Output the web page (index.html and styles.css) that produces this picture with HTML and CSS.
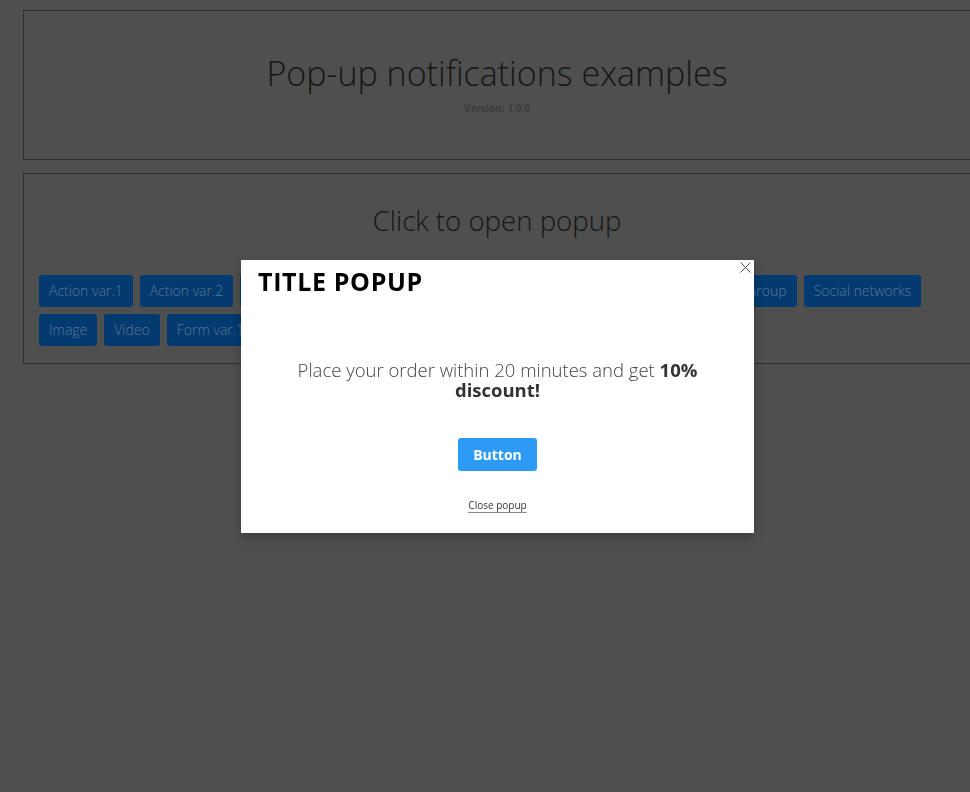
FILE: index.html
```html
<!DOCTYPE html>
<html lang="en">
<head>
    <meta charset="UTF-8">
    <meta name="viewport" content="width=device-width, initial-scale=1.0">
    <title>Pop-up notifications examples</title>
    <link rel="stylesheet" href="styles.css">
</head>
<body>
    <div class="page">
        <div class="header">
            <h1>Pop-up notifications examples</h1>
            <p class="version">Version: 1.0.0</p>
        </div>

        <div class="demo">
            <h2>Click to open popup</h2>
            <div class="buttons">
                <a href="#" class="btn">Action var.1</a>
                <a href="#" class="btn">Action var.2</a>
                <a href="#" class="btn">Action var.3</a>
                <a href="#" class="btn">Subscribe var.1</a>
                <a href="#" class="btn">Subscribe var.2</a>
                <a href="#" class="btn">Countdown timer 1</a>
                <a href="#" class="btn">Group</a>
                <a href="#" class="btn">Social networks</a>
                <a href="#" class="btn">Image</a>
                <a href="#" class="btn">Video</a>
                <a href="#" class="btn">Form var.1</a>
                <a href="#" class="btn">Form var.2</a>
                <a href="#" class="btn">Cookies</a>
            </div>
        </div>
    </div>

    <div class="popup">
        <a href="#" class="popup-close" aria-label="Close">
            <svg width="11" height="11" viewBox="0 0 11 11">
                <path d="M0.5 0.5 L10.5 10.5 M10.5 0.5 L0.5 10.5" stroke="#555" stroke-width="1" fill="none"/>
            </svg>
        </a>
        <h3 class="popup-title">TITLE POPUP</h3>
        <p class="popup-text">Place your order within 20 minutes and get <b>10%</b> <b>discount!</b></p>
        <a href="#" class="popup-btn">Button</a>
        <a href="#" class="popup-link">Close popup</a>
    </div>
</body>
</html>
```

FILE: styles.css
```css
body {
    font-family: 'Open Sans', 'Liberation Sans', sans-serif;
    background-color: #4f4f4f;
    color: #1a1a1a;
    margin: 0;
    overflow: hidden;
}

.page {
    padding: 10px 0 0 23px;
    width: 948px;
}

.header {
    height: 150px;
    box-sizing: border-box;
    border: 1px solid #2f2f2f;
    padding-top: 45px;
    text-align: center;
}

.header h1 {
    font-size: 34px;
    font-weight: 300;
    line-height: 1;
    margin: 0;
    color: #161616;
}

.version {
    font-size: 10px;
    font-weight: 700;
    line-height: 12px;
    margin: 12px 0 0;
    color: #3c3c3c;
}

.demo {
    margin-top: 13px;
    border: 1px solid #2f2f2f;
    padding: 33px 15px 17px;
}

.demo h2 {
    font-size: 27.6px;
    font-weight: 300;
    line-height: 1;
    margin: 0 0 40px;
    text-align: center;
    color: #161616;
}

.buttons {
    display: flex;
    flex-wrap: wrap;
    gap: 7px;
}

.btn {
    display: block;
    height: 32px;
    line-height: 32px;
    padding: 0 10px;
    border-radius: 3px;
    background-color: #033a70;
    color: #5d7590;
    font-size: 14px;
    font-weight: 300;
    text-decoration: none;
}

.popup {
    position: fixed;
    top: 260px;
    left: 241px;
    width: 513px;
    height: 273px;
    box-sizing: border-box;
    padding: 9px 17px 0;
    background: #ffffff;
    box-shadow: 0 4px 10px rgba(0, 0, 0, 0.25);
    display: flex;
    flex-direction: column;
    align-items: center;
}

.popup-close {
    position: absolute;
    top: 2px;
    right: 3px;
    line-height: 0;
}

.popup-title {
    align-self: flex-start;
    font-size: 25px;
    font-weight: 700;
    line-height: 1;
    margin: 0;
    color: #000000;
    letter-spacing: 0.65px;
}

.popup-text {
    margin: 66px 0 0;
    padding: 0 36px;
    font-size: 18.5px;
    font-weight: 300;
    line-height: 20px;
    text-align: center;
    color: #444444;
}

.popup-text b {
    font-weight: 700;
    color: #333333;
}

.popup-btn {
    margin-top: 38px;
    height: 33px;
    line-height: 33px;
    padding: 0 15px;
    border-radius: 3px;
    background-color: #2d9bf5;
    color: #ffffff;
    font-size: 14px;
    font-weight: 700;
    text-decoration: none;
}

.popup-link {
    margin-top: 28px;
    font-size: 10px;
    line-height: 12px;
    color: #333333;
    text-decoration: underline;
    text-decoration-color: #888888;
    text-underline-offset: 3px;
}
```
